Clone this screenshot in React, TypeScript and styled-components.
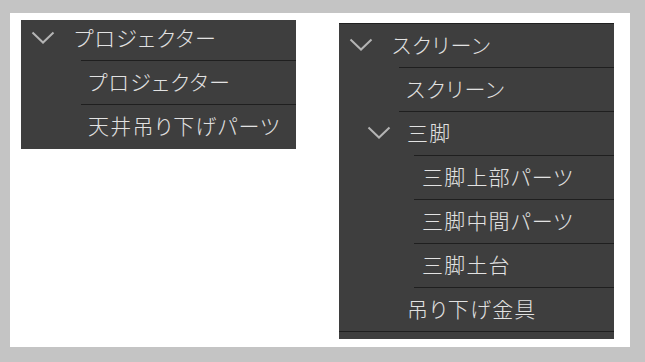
import React from "react";
import styled, { createGlobalStyle } from "styled-components";

const GlobalStyle = createGlobalStyle`
  html, body {
    margin: 0;
    padding: 0;
    background: #c4c4c4;
  }
  body {
    font-family: "Noto Sans CJK JP", "Noto Sans", sans-serif;
  }
`;

const Canvas = styled.div`
  margin: 13px 0 0 10px;
  width: 620px;
  height: 334px;
  background: #ffffff;
  display: flex;
  align-items: flex-start;
  gap: 43px;
  padding: 7px 0 0 11px;
  box-sizing: border-box;
`;

const Panel = styled.div<{ $height: number; $top: number; $border?: boolean }>`
  width: 275px;
  height: ${(p) => p.$height}px;
  margin-top: ${(p) => p.$top}px;
  background: #3e3e3e;
  overflow: hidden;
  border-top: ${(p) => (p.$border ? "1px solid #202020" : "none")};
  box-sizing: border-box;
`;

const List = styled.div<{ $shift: number }>`
  display: flex;
  flex-direction: column;
  margin-top: ${(p) => p.$shift}px;
`;

const Row = styled.div`
  display: flex;
  flex-direction: column;
`;

const RowBody = styled.div<{ $indent: number }>`
  height: 43px;
  display: flex;
  align-items: center;
  padding-left: ${(p) => p.$indent}px;
  padding-bottom: 2px;
  box-sizing: border-box;
`;

const Rule = styled.div<{ $from: number }>`
  height: 1px;
  margin-left: ${(p) => p.$from}px;
  background: #1f1f1f;
`;

const ChevronBox = styled.span<{ $width: number }>`
  width: ${(p) => p.$width}px;
  display: flex;
  align-items: center;
  flex-shrink: 0;
`;

const Label = styled.span`
  color: #e2e2e2;
  font-size: 21px;
  font-weight: 300;
  line-height: 1;
  font-feature-settings: "palt";
  letter-spacing: 1.2px;
  white-space: nowrap;
`;

type Item = {
  label: string;
  indent: number;
  header?: boolean;
  chevronWidth?: number;
  rule?: number | null;
};

const Chevron = () => (
  <svg width="24" height="13" viewBox="0 0 24 13">
    <polyline
      points="1.5,1.5 12,11.5 22.5,1.5"
      fill="none"
      stroke="#b4b4b4"
      strokeWidth="2"
    />
  </svg>
);

const TreeRow = ({ item }: { item: Item }) => (
  <Row>
    <RowBody $indent={item.indent}>
      {item.header && (
        <ChevronBox $width={item.chevronWidth || 42}>
          <Chevron />
        </ChevronBox>
      )}
      <Label>{item.label}</Label>
    </RowBody>
    {item.rule !== null && item.rule !== undefined && <Rule $from={item.rule} />}
  </Row>
);

const leftItems: Item[] = [
  { label: "プロジェクター", indent: 10, header: true, chevronWidth: 43, rule: 60 },
  { label: "プロジェクター", indent: 67, rule: 60 },
  { label: "天井吊り下げパーツ", indent: 67, rule: null },
];

const rightItems: Item[] = [
  { label: "スクリーン", indent: 10, header: true, chevronWidth: 43, rule: 60 },
  { label: "スクリーン", indent: 67, rule: 60 },
  { label: "三脚", indent: 28, header: true, chevronWidth: 40, rule: 75 },
  { label: "三脚上部パーツ", indent: 83, rule: 75 },
  { label: "三脚中間パーツ", indent: 83, rule: 75 },
  { label: "三脚土台", indent: 83, rule: 75 },
  { label: "吊り下げ金具", indent: 68, rule: 0 },
];

export default function App() {
  return (
    <>
      <GlobalStyle />
      <Canvas>
        <Panel $height={129} $top={0}>
          <List $shift={-3}>
            {leftItems.map((it, i) => (
              <TreeRow key={i} item={it} />
            ))}
          </List>
        </Panel>
        <Panel $height={316} $top={3} $border>
          <List $shift={0}>
            {rightItems.map((it, i) => (
              <TreeRow key={i} item={it} />
            ))}
          </List>
        </Panel>
      </Canvas>
    </>
  );
}
